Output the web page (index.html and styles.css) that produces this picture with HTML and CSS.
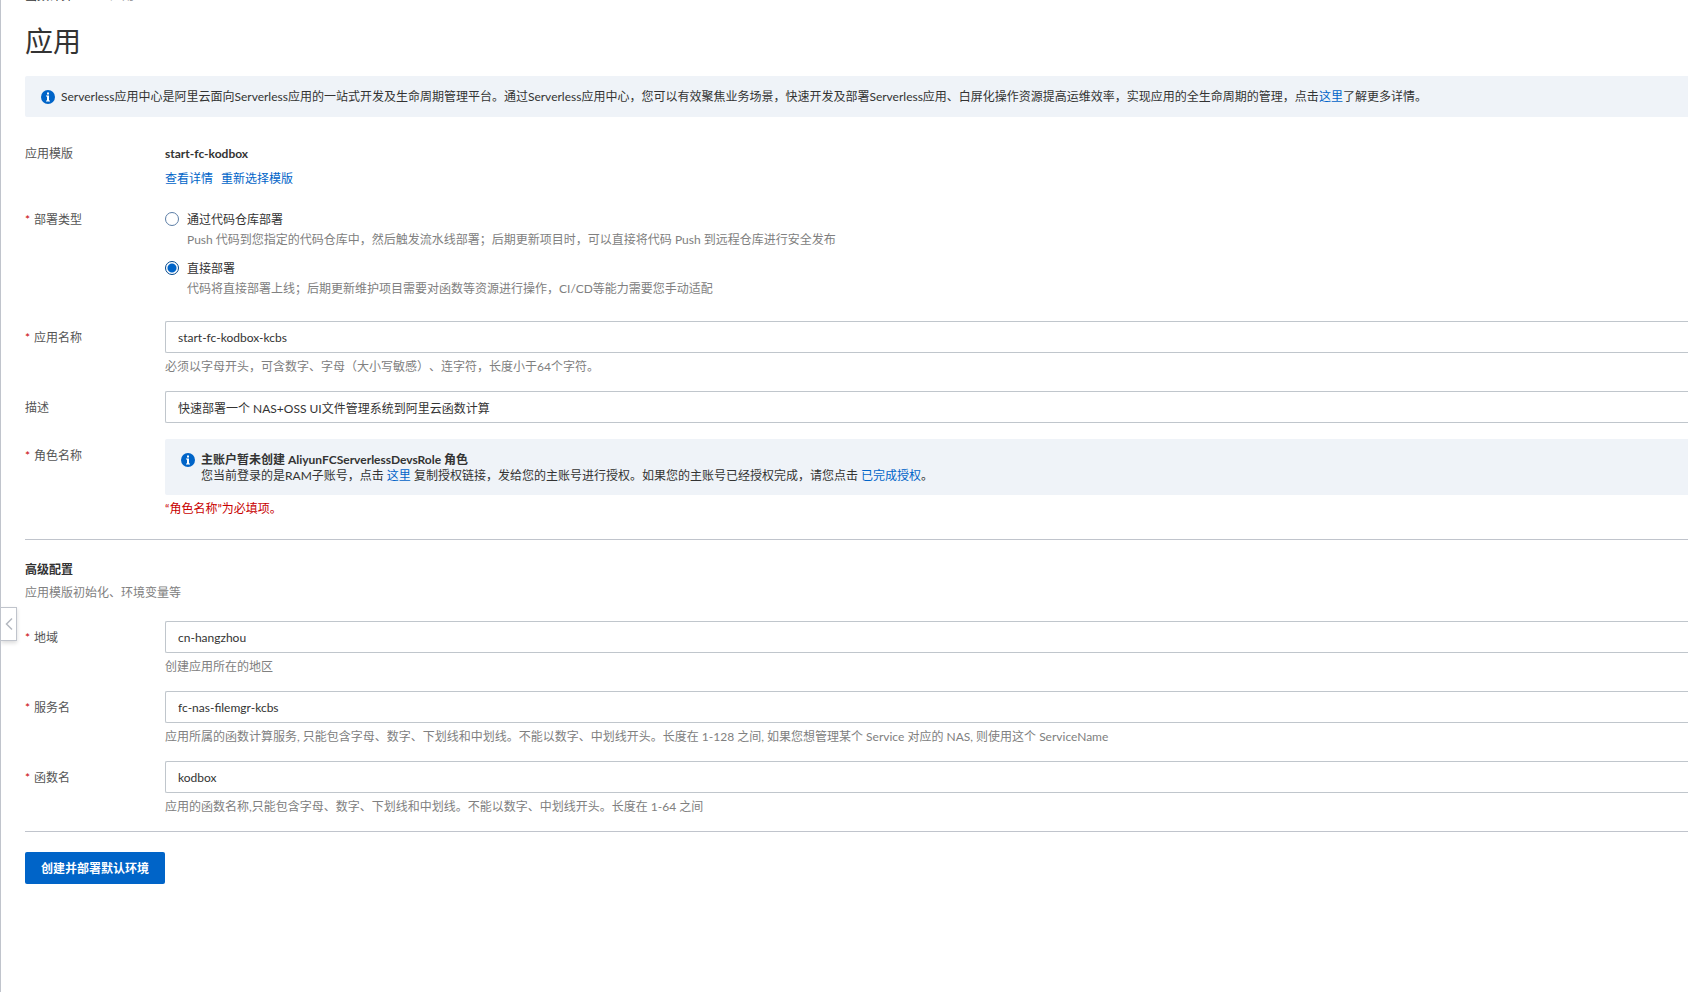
FILE: index.html
```html
<!DOCTYPE html>
<html lang="zh-CN">
<head>
<meta charset="utf-8">
<title>应用</title>
<link rel="stylesheet" href="styles.css">
</head>
<body>
<main class="page">
  <nav class="breadcrumb" aria-label="导航"><a href="#">函数计算 FC</a><span class="crumb-sep">/</span><span class="crumb-current">应用</span></nav>
  <h1 class="title">应用</h1>

  <div class="notice">
    <svg class="info-icon" viewBox="0 0 14 14" aria-hidden="true"><circle cx="7" cy="7" r="7" fill="#0064c8"/><path d="M6 2.5h2v2H6zM5 5.5h3v5h1v1H5v-1h1v-4H5z" fill="#fff"/></svg>
    <p class="notice-text">Serverless应用中心是阿里云面向Serverless应用的一站式开发及生命周期管理平台。通过Serverless应用中心，您可以有效聚焦业务场景，快速开发及部署Serverless应用、白屏化操作资源提高运维效率，实现应用的全生命周期的管理，点击<a href="#">这里</a>了解更多详情。</p>
  </div>

  <form class="form">
    <div class="row row-template">
      <span class="label">应用模版</span>
      <div class="field">
        <strong class="template-name">start-fc-kodbox</strong>
        <div class="links"><a href="#">查看详情</a><a href="#">重新选择模版</a></div>
      </div>
    </div>

    <div class="row row-deploy" role="radiogroup" aria-labelledby="deploy-label">
      <span class="label required" id="deploy-label">部署类型</span>
      <div class="field options">
        <div class="option">
          <input class="radio" type="radio" name="deploy" id="deploy-repo">
          <div><label for="deploy-repo">通过代码仓库部署</label>
          <p class="option-hint">Push 代码到您指定的代码仓库中，然后触发流水线部署；后期更新项目时，可以直接将代码 Push 到远程仓库进行安全发布</p></div>
        </div>
        <div class="option">
          <input class="radio" type="radio" name="deploy" id="deploy-direct" checked>
          <div><label for="deploy-direct">直接部署</label>
          <p class="option-hint">代码将直接部署上线；后期更新维护项目需要对函数等资源进行操作，CI/CD等能力需要您手动适配</p></div>
        </div>
      </div>
    </div>

    <div class="row">
      <label class="label tall required" for="app-name">应用名称</label>
      <div class="field">
        <input class="input" type="text" id="app-name" value="start-fc-kodbox-kcbs">
        <p class="hint">必须以字母开头，可含数字、字母（大小写敏感）、连字符，长度小于64个字符。</p>
      </div>
    </div>

    <div class="row">
      <label class="label tall" for="desc">描述</label>
      <div class="field"><input class="input" type="text" id="desc" value="快速部署一个 NAS+OSS UI文件管理系统到阿里云函数计算"></div>
    </div>

    <div class="row">
      <span class="label tall required">角色名称</span>
      <div class="field">
        <div class="notice notice-role">
          <svg class="info-icon" viewBox="0 0 14 14" aria-hidden="true"><circle cx="7" cy="7" r="7" fill="#0064c8"/><path d="M6 2.5h2v2H6zM5 5.5h3v5h1v1H5v-1h1v-4H5z" fill="#fff"/></svg>
          <div class="notice-body">
            <strong>主账户暂未创建 AliyunFCServerlessDevsRole 角色</strong>
            <p>您当前登录的是RAM子账号，点击 <a href="#">这里</a> 复制授权链接，发给您的主账号进行授权。如果您的主账号已经授权完成，请您点击 <a href="#">已完成授权</a>。</p>
          </div>
        </div>
        <p class="hint error">“角色名称”为必填项。</p>
      </div>
    </div>

    <section class="advanced">
      <h2 class="section-title">高级配置</h2>
      <p class="section-sub">应用模版初始化、环境变量等</p>

      <div class="row">
        <label class="label tall required" for="region">地域</label>
        <div class="field">
          <input class="input" type="text" id="region" value="cn-hangzhou">
          <p class="hint">创建应用所在的地区</p>
        </div>
      </div>
      <div class="row">
        <label class="label tall required" for="service">服务名</label>
        <div class="field">
          <input class="input" type="text" id="service" value="fc-nas-filemgr-kcbs">
          <p class="hint">应用所属的函数计算服务, 只能包含字母、数字、下划线和中划线。不能以数字、中划线开头。长度在 1-128 之间, 如果您想管理某个 Service 对应的 NAS, 则使用这个 ServiceName</p>
        </div>
      </div>
      <div class="row">
        <label class="label tall required" for="func">函数名</label>
        <div class="field">
          <input class="input" type="text" id="func" value="kodbox">
          <p class="hint">应用的函数名称,只能包含字母、数字、下划线和中划线。不能以数字、中划线开头。长度在 1-64 之间</p>
        </div>
      </div>
    </section>

    <div class="actions"><button class="submit" type="button">创建并部署默认环境</button></div>
  </form>

  <button class="collapse" type="button" aria-label="收起"><svg viewBox="0 0 8 14" aria-hidden="true"><path d="M7 1.5 1.5 7 7 12.5" fill="none" stroke="#b4b8c0" stroke-width="1.5"/></svg></button>
</main>
</body>
</html>
```
FILE: styles.css
```css
* { box-sizing: border-box; }

body {
  margin: 0;
  background: #fff;
  color: #333;
  font: 12px/18px Lato, "Noto Sans CJK SC", sans-serif;
  text-spacing-trim: space-all;
}

p, h1, h2 { margin: 0; }

a { color: #0064c8; text-decoration: none; }

.page {
  position: relative;
  min-height: 100vh;
  overflow: hidden;
  padding-left: 24px;
  border-left: 1px solid #c0c4cc;
}

.breadcrumb {
  display: flex;
  gap: 7px;
  height: 18px;
  margin-top: -13px;
  color: #999;
}

.breadcrumb a { color: #333; }

.title {
  margin-top: 17px;
  font-size: 28px;
  font-weight: 400;
  line-height: 38px;
}

.notice {
  display: flex;
  gap: 6px;
  margin-top: 16px;
  padding: 12px 16px 11px;
  border-radius: 2px 0 0 2px;
  background: #eff3f8;
}

.info-icon {
  flex: none;
  width: 14px;
  height: 14px;
  margin-top: 2px;
}

.notice-text { white-space: nowrap; }

.form { padding-top: 28px; }

.row {
  display: flex;
  margin-bottom: 16px;
}

.label {
  flex: none;
  width: 140px;
  color: #555;
}

.tall { line-height: 34px; }

.required::before {
  content: "*";
  margin-right: 4px;
  color: #c80000;
}

.field {
  flex: 1;
  min-width: 0;
}

.template-name { display: block; }

.links {
  display: flex;
  gap: 8px;
  margin-top: 7px;
}

.row-template { margin-bottom: 23px; }

.row-deploy { margin-bottom: 23px; }

.options {
  display: flex;
  flex-direction: column;
  gap: 11px;
}

.option {
  display: flex;
  gap: 8px;
}

.option label { display: block; }

.radio {
  flex: none;
  appearance: none;
  width: 14px;
  height: 14px;
  margin: 1px 0 0;
  border: 1px solid #5c7ea6;
  border-radius: 50%;
  background: #fff;
}

.radio:checked {
  border-color: #00468c;
  background: radial-gradient(circle, #0064c8 4px, #fff 5px);
}

.option-hint {
  margin-top: 2px;
  color: #808080;
}

.input {
  display: block;
  width: 100%;
  height: 32px;
  padding: 0 12px;
  border: 1px solid #c0c6cc;
  border-right: 0;
  border-radius: 2px 0 0 2px;
  background: #fff;
  color: #333;
  font: inherit;
}

/* The label line is taller than the input, so keep it out of the row height. */
.label.tall { height: 32px; }

.hint {
  margin-top: 6px;
  color: #808080;
  line-height: 16px;
}

.notice-role {
  margin-top: 0;
  padding: 13px 16px 11px;
  line-height: 16px;
}

.notice-role .info-icon { margin-top: 1px; }

.notice-body strong { display: block; }

.error { color: #c80000; }

.advanced {
  margin-top: 22px;
  border-top: 1px solid #c0c4cc;
  padding-top: 21px;
}

.section-title {
  font-size: 12px;
  line-height: 18px;
}

.section-sub {
  margin: 5px 0 19px;
  color: #808080;
}

.actions {
  border-top: 1px solid #c0c4cc;
  padding-top: 20px;
}

.submit {
  height: 32px;
  padding: 1px 16px 0;
  border: 0;
  border-radius: 2px;
  background: #0064c8;
  color: #fff;
  font: inherit;
  font-weight: 700;
}

.collapse {
  position: absolute;
  top: 607px;
  left: 0;
  display: flex;
  align-items: center;
  justify-content: center;
  width: 16px;
  height: 34px;
  padding: 0;
  border: 1px solid #c0c4cc;
  border-left: 0;
  background: #fff;
  box-shadow: 0 2px 4px rgba(0, 0, 0, 0.15);
}

.collapse svg {
  width: 8px;
  height: 14px;
}
```
